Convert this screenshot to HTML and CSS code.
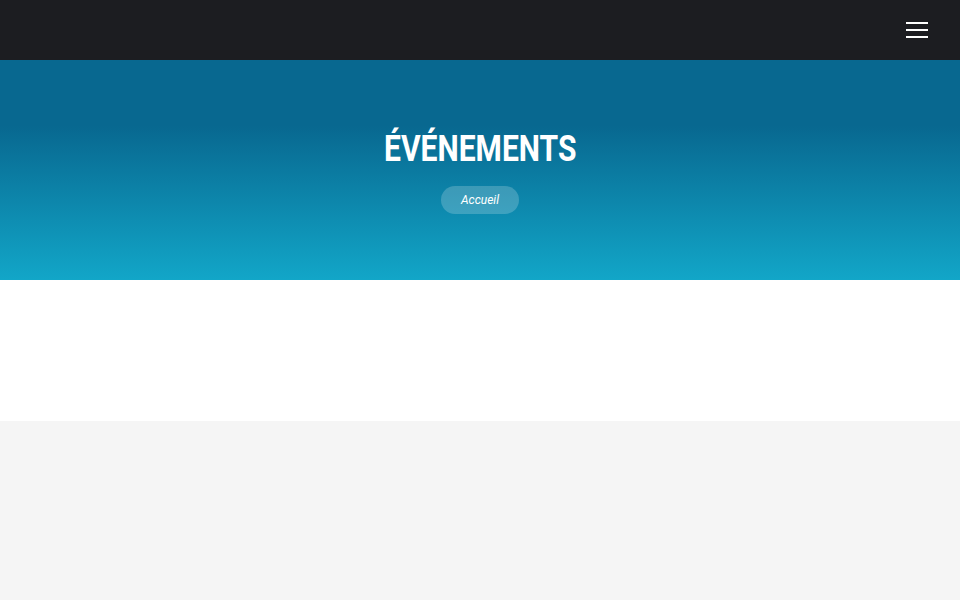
FILE: index.html
```html
<!doctype html>
<html lang="fr">
<head>
	<meta charset="UTF-8" />
	<title>Événements</title>
	<link rel="stylesheet" href="styles.css">
</head>
<body>
	<div class="topbar">
		<button class="burger" aria-label="Menu">
			<span></span><span></span><span></span>
		</button>
	</div>
	<div class="banner">
		<h1 class="banner-title">ÉVÉNEMENTS</h1>
		<div class="crumbs"><a href="#">Accueil</a></div>
	</div>
	<div class="content"></div>
	<div class="footer-zone"></div>
</body>
</html>
```

FILE: styles.css
```css
body{margin: 0;padding: 0;font-family: Roboto, "Liberation Sans", sans-serif;}

.topbar{height: 60px;background: #1c1d21;display: flex;justify-content: flex-end;align-items: center;padding-right: 32px;}
.burger{width: 22px;height: 16px;padding: 0;border: 0;background: none;display: flex;flex-direction: column;justify-content: space-between;cursor: pointer;}
.burger span{display: block;height: 2px;background: #fff;}

.banner{height: 220px;background: linear-gradient(to bottom, #086890 0%, #086890 30%, #12a6c8 100%);display: flex;flex-direction: column;align-items: center;box-sizing: border-box;padding-top: 67px;}
.banner-title{margin: 0;color: #fff;font-size: 36px;font-weight: 700;line-height: 44px;transform: scaleX(0.835);}
.crumbs{margin-top: 15px;}
.crumbs a{display: block;height: 28px;line-height: 28px;padding: 0 20px;border-radius: 14px;background: rgba(255,255,255,0.2);color: #fff;font-size: 12px;font-style: italic;text-decoration: none;}

.content{height: 141px;background: #fff;}
.footer-zone{height: 179px;background: #f5f5f5;}
```
